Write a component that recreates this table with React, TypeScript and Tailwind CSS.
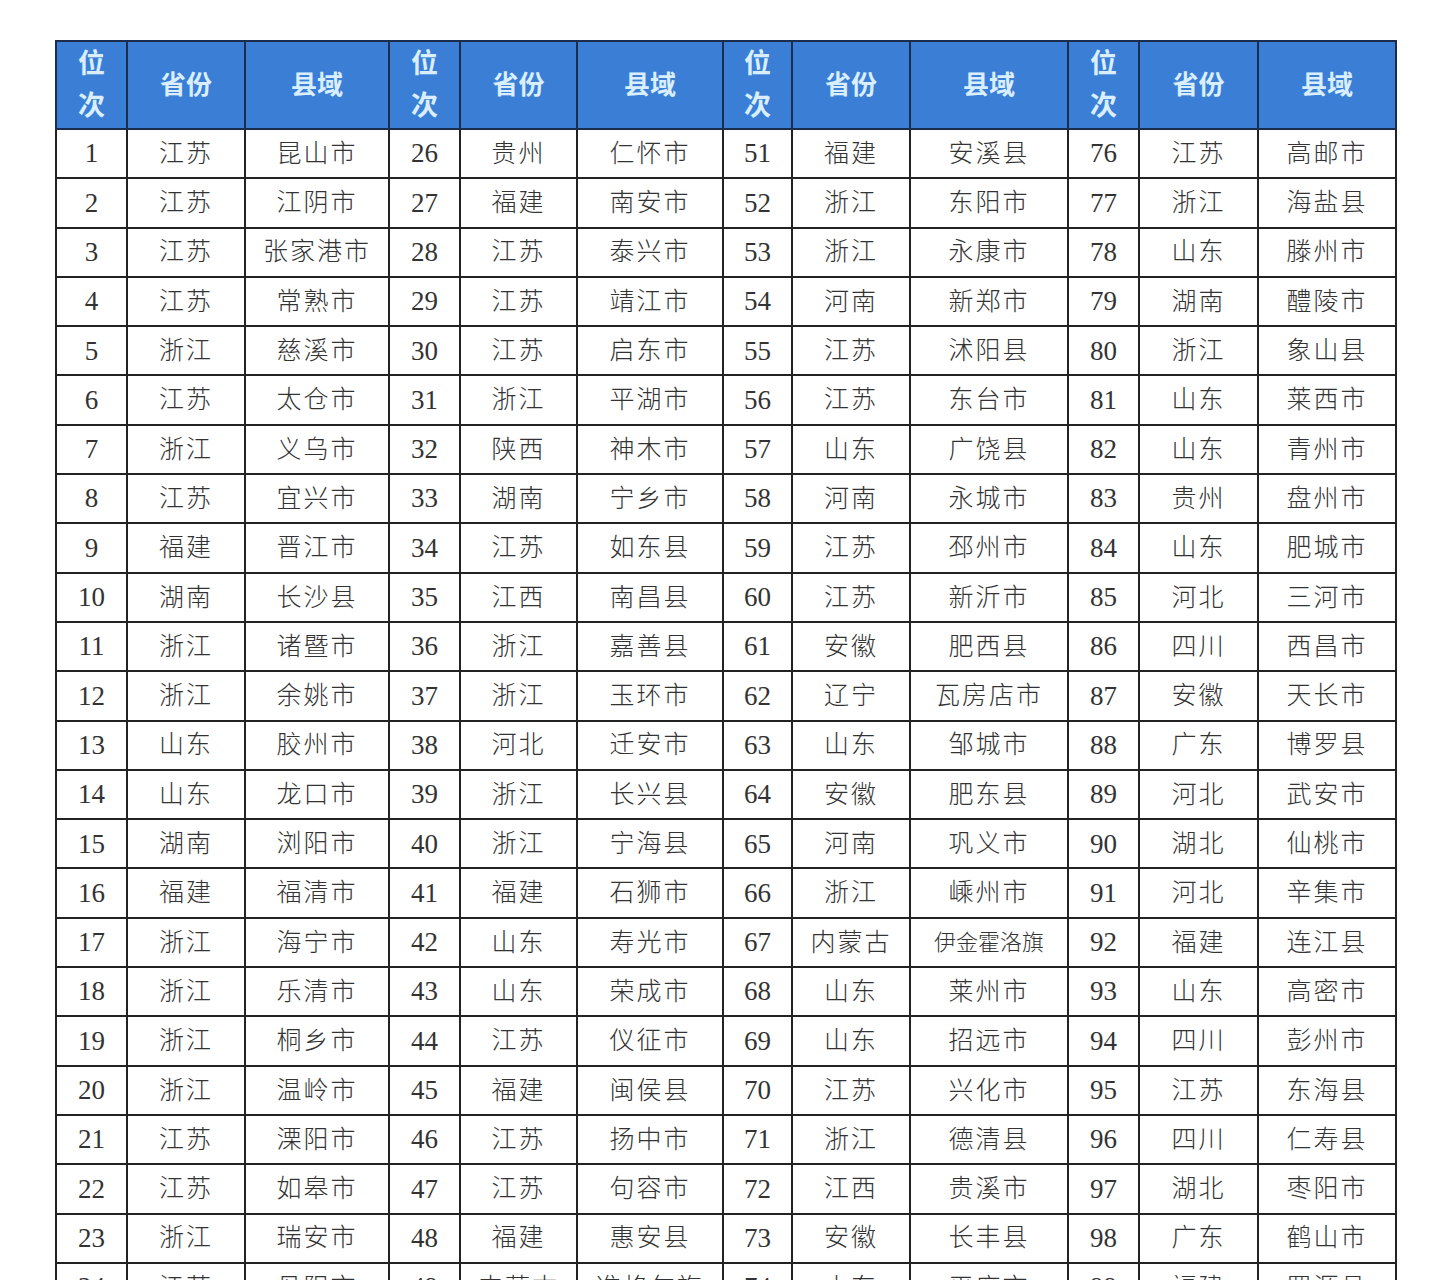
const rows: [string, string, string][][] = [
  [['1', '江苏', '昆山市'], ['26', '贵州', '仁怀市'], ['51', '福建', '安溪县'], ['76', '江苏', '高邮市']],
  [['2', '江苏', '江阴市'], ['27', '福建', '南安市'], ['52', '浙江', '东阳市'], ['77', '浙江', '海盐县']],
  [['3', '江苏', '张家港市'], ['28', '江苏', '泰兴市'], ['53', '浙江', '永康市'], ['78', '山东', '滕州市']],
  [['4', '江苏', '常熟市'], ['29', '江苏', '靖江市'], ['54', '河南', '新郑市'], ['79', '湖南', '醴陵市']],
  [['5', '浙江', '慈溪市'], ['30', '江苏', '启东市'], ['55', '江苏', '沭阳县'], ['80', '浙江', '象山县']],
  [['6', '江苏', '太仓市'], ['31', '浙江', '平湖市'], ['56', '江苏', '东台市'], ['81', '山东', '莱西市']],
  [['7', '浙江', '义乌市'], ['32', '陕西', '神木市'], ['57', '山东', '广饶县'], ['82', '山东', '青州市']],
  [['8', '江苏', '宜兴市'], ['33', '湖南', '宁乡市'], ['58', '河南', '永城市'], ['83', '贵州', '盘州市']],
  [['9', '福建', '晋江市'], ['34', '江苏', '如东县'], ['59', '江苏', '邳州市'], ['84', '山东', '肥城市']],
  [['10', '湖南', '长沙县'], ['35', '江西', '南昌县'], ['60', '江苏', '新沂市'], ['85', '河北', '三河市']],
  [['11', '浙江', '诸暨市'], ['36', '浙江', '嘉善县'], ['61', '安徽', '肥西县'], ['86', '四川', '西昌市']],
  [['12', '浙江', '余姚市'], ['37', '浙江', '玉环市'], ['62', '辽宁', '瓦房店市'], ['87', '安徽', '天长市']],
  [['13', '山东', '胶州市'], ['38', '河北', '迁安市'], ['63', '山东', '邹城市'], ['88', '广东', '博罗县']],
  [['14', '山东', '龙口市'], ['39', '浙江', '长兴县'], ['64', '安徽', '肥东县'], ['89', '河北', '武安市']],
  [['15', '湖南', '浏阳市'], ['40', '浙江', '宁海县'], ['65', '河南', '巩义市'], ['90', '湖北', '仙桃市']],
  [['16', '福建', '福清市'], ['41', '福建', '石狮市'], ['66', '浙江', '嵊州市'], ['91', '河北', '辛集市']],
  [['17', '浙江', '海宁市'], ['42', '山东', '寿光市'], ['67', '内蒙古', '伊金霍洛旗'], ['92', '福建', '连江县']],
  [['18', '浙江', '乐清市'], ['43', '山东', '荣成市'], ['68', '山东', '莱州市'], ['93', '山东', '高密市']],
  [['19', '浙江', '桐乡市'], ['44', '江苏', '仪征市'], ['69', '山东', '招远市'], ['94', '四川', '彭州市']],
  [['20', '浙江', '温岭市'], ['45', '福建', '闽侯县'], ['70', '江苏', '兴化市'], ['95', '江苏', '东海县']],
  [['21', '江苏', '溧阳市'], ['46', '江苏', '扬中市'], ['71', '浙江', '德清县'], ['96', '四川', '仁寿县']],
  [['22', '江苏', '如皋市'], ['47', '江苏', '句容市'], ['72', '江西', '贵溪市'], ['97', '湖北', '枣阳市']],
  [['23', '浙江', '瑞安市'], ['48', '福建', '惠安县'], ['73', '安徽', '长丰县'], ['98', '广东', '鹤山市']],
  [['24', '江苏', '丹阳市'], ['49', '内蒙古', '准格尔旗'], ['74', '山东', '平度市'], ['99', '福建', '罗源县']],
]

const widths = [71, 118, 144, 71, 117, 146, 69, 118, 158, 71, 119, 138]

const serif = { fontFamily: '"Liberation Serif", "Noto Sans CJK SC", serif' }

export default function App() {
  return (
    <div className="w-[1446px] h-[1280px] overflow-hidden bg-white pt-[40px] pl-[55px]">
      <table className="border-collapse table-fixed w-[1340px]" style={serif}>
        <colgroup>
          {widths.map((w, i) => (
            <col key={i} style={{ width: w }} />
          ))}
        </colgroup>
        <thead>
          <tr className="h-[88px] bg-[#3b7ed6]">
            {[0, 1, 2, 3].flatMap(g => [
              <th key={`a${g}`} className="border-2 border-[#1c2c4c] text-[#d9efff] text-[27px] font-bold leading-[42px] p-0">
                位<br />次
              </th>,
              <th key={`b${g}`} className="border-2 border-[#1c2c4c] text-[#d9efff] text-[26px] font-bold p-0">
                省份
              </th>,
              <th key={`c${g}`} className="border-2 border-[#1c2c4c] text-[#d9efff] text-[26px] font-bold p-0">
                县域
              </th>,
            ])}
          </tr>
        </thead>
        <tbody>
          {rows.map((row, r) => (
            <tr key={r} className="h-[49.3px]">
              {row.flatMap((cell, g) => [
                <td key={`${g}n`} className="border-2 border-[#222] text-center text-[27px] text-[#333] p-0 align-middle">
                  {cell[0]}
                </td>,
                <td key={`${g}p`} className="border-2 border-[#222] text-center text-[25px] font-light text-[#333] p-0 tracking-[2px]">
                  {cell[1]}
                </td>,
                <td
                  key={`${g}c`}
                  className={`border-2 border-[#222] text-center font-light text-[#333] p-0 ${
                    cell[2].length > 4 ? 'text-[22px]' : 'text-[25px] tracking-[2px]'
                  }`}
                >
                  {cell[2]}
                </td>,
              ])}
            </tr>
          ))}
        </tbody>
      </table>
    </div>
  )
}
